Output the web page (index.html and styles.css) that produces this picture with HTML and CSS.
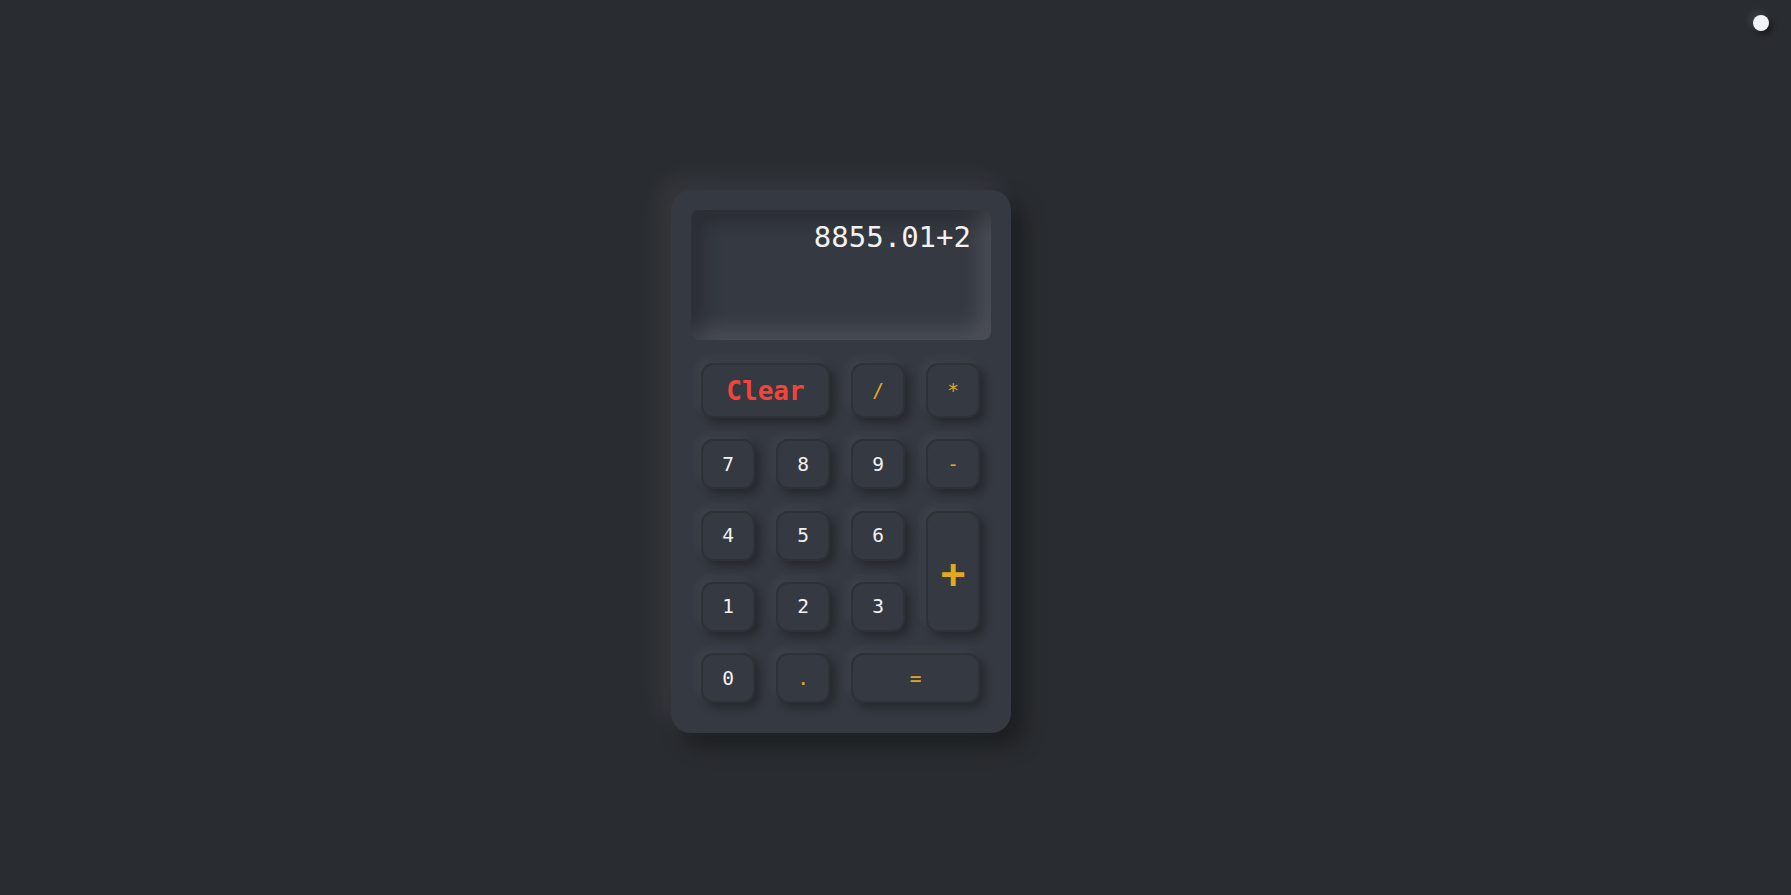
FILE: index.html
```html
<!DOCTYPE html>
<html lang="en">
<head>
<meta charset="utf-8">
<title>Calculator</title>
<link rel="stylesheet" href="styles.css">
</head>
<body>
<button class="theme-toggle" aria-label="Toggle theme"></button>
<main class="stage">
  <div class="calculator">
    <div class="display"><span class="display-text">8855.01+2</span></div>
    <div class="keys">
      <button class="key key-clear span-2">Clear</button>
      <button class="key key-op">/</button>
      <button class="key key-op">*</button>
      <button class="key">7</button>
      <button class="key">8</button>
      <button class="key">9</button>
      <button class="key key-op">-</button>
      <button class="key">4</button>
      <button class="key">5</button>
      <button class="key">6</button>
      <button class="key key-op key-plus">+</button>
      <button class="key">1</button>
      <button class="key">2</button>
      <button class="key">3</button>
      <button class="key">0</button>
      <button class="key key-op">.</button>
      <button class="key key-op span-2">=</button>
    </div>
  </div>
</main>
</body>
</html>
```
FILE: styles.css
```css
* { box-sizing: border-box; }

html, body {
  margin: 0;
  height: 100%;
}

body {
  background: #292c30;
  font-family: "DejaVu Sans Mono", "Liberation Mono", monospace;
  overflow: hidden;
}

.stage {
  min-height: 100vh;
  display: flex;
  align-items: center;
  justify-content: center;
  padding: 28px 109px 0 0;
}

.theme-toggle {
  position: absolute;
  top: 15px;
  right: 22px;
  width: 16px;
  height: 16px;
  padding: 0;
  border: none;
  border-radius: 50%;
  background: #f0f3f7;
  box-shadow: -3px -3px 8px rgba(255, 255, 255, 0.12), 3px 3px 6px rgba(0, 0, 0, 0.45);
}

.calculator {
  width: 340px;
  background: #353941;
  border-radius: 20px;
  padding: 20px 20px 20px;
  box-shadow: -10px -10px 28px rgba(255, 255, 255, 0.07), 12px 12px 22px rgba(0, 0, 0, 0.35);
}

.display {
  height: 130px;
  border-radius: 8px;
  background: #353941;
  box-shadow: inset 10px 10px 20px rgba(0, 0, 0, 0.25), inset -10px -10px 22px rgba(255, 255, 255, 0.13);
  padding: 11px 20px 0 0;
  text-align: right;
}

.display-text {
  color: #f2f2f2;
  font-size: 29px;
  line-height: 1.164;
}

.keys {
  margin-top: 23px;
  padding: 0 10px 10px;
  display: grid;
  grid-template-columns: repeat(4, 54px);
  grid-template-rows: 55px repeat(4, 50px);
  column-gap: 21px;
  row-gap: 21.25px;
}

.key {
  font-family: inherit;
  background: #353941;
  border: 2px solid #2e3136;
  border-radius: 12px;
  color: #f2f2f2;
  font-size: 19.5px;
  padding: 0;
  box-shadow: -5px -5px 10px rgba(255, 255, 255, 0.045), 5px 5px 10px rgba(0, 0, 0, 0.3);
}

.span-2 { grid-column: span 2; }

.key-clear {
  color: #f0453b;
  font-size: 26px;
  font-weight: bold;
}

.key-op { color: #e2a824; }

.key-plus {
  grid-row: span 2;
  font-size: 41px;
  font-weight: bold;
  padding-top: 5px;
}
```
